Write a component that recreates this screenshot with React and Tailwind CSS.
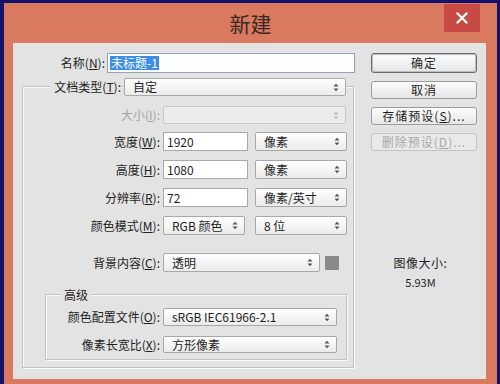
import React from "react";

const F = { fontFamily: '"Noto Sans CJK SC", "Noto Sans", sans-serif' };

function Arrows({ dim }) {
  const c = dim ? "#b8b8b8" : "#555";
  return (
    <svg width="6" height="9" viewBox="0 0 6 9" className="shrink-0">
      <path d="M0.5 3.5 L3 0.8 L5.5 3.5 Z" fill={c} />
      <path d="M0.5 5.5 L3 8.2 L5.5 5.5 Z" fill={c} />
    </svg>
  );
}

function Select({ w, h = 18, children, dim }) {
  return (
    <div
      className={`flex items-center justify-between rounded-[2px] border ${dim ? "border-[#c6c6c6] bg-[#ececec]" : "border-[#a8a8a8] bg-gradient-to-b from-[#ffffff] to-[#ebebeb]"} pl-[8px] pr-[6px] text-[12px] text-[#1e1e1e] shrink-0`}
      style={{ width: w, height: h }}
    >
      <span className="leading-none">{children}</span>
      <Arrows dim={dim} />
    </div>
  );
}

function Input({ w, h = 19, children }) {
  return (
    <div
      className="flex items-center border border-[#a9a9a9] bg-white pl-[3px] text-[12px] text-[#1e1e1e] shrink-0"
      style={{ width: w, height: h }}
    >
      <span className="leading-none">{children}</span>
    </div>
  );
}

function Label({ w, children, dim }) {
  return (
    <div
      className={`shrink-0 text-right text-[12px] leading-none ${dim ? "text-[#a3a3a3]" : "text-[#1e1e1e]"}`}
      style={{ width: w }}
    >
      {children}
    </div>
  );
}

function Btn({ children, h = 18, def, dim }) {
  return (
    <div
      className={`flex w-[106px] items-center justify-center rounded-[3px] border ${def ? "border-[#6d6d6d] shadow-[inset_0_0_0_1px_#bdbdbd]" : dim ? "border-[#c4c4c4]" : "border-[#9c9c9c]"} ${dim ? "bg-[#e9e9e9] text-[#a8a8a8]" : "bg-gradient-to-b from-[#fdfdfd] to-[#e6e6e6] text-[#1e1e1e]"} text-[12px] leading-none tracking-[1px]`}
      style={{ height: h }}
    >
      {children}
    </div>
  );
}

export default function App() {
  return (
    <div className="h-[384px] w-[500px] overflow-hidden bg-[#13126a] pl-[4px] pr-[3px] pt-[3px]" style={F}>
      <div className="relative flex h-[381px] flex-col bg-[#d9795f]">
        <div className="flex h-[40px] items-center justify-center">
          <span className="text-[21px] leading-none text-[#3b2824]">新建</span>
          <div className="absolute left-[440px] top-[1px] flex h-[28px] w-[36px] items-center justify-center bg-[#c84a45]">
            <svg width="12" height="12" viewBox="0 0 12 12">
              <path d="M1.5 1.5 L10.5 10.5 M10.5 1.5 L1.5 10.5" stroke="#fff" strokeWidth="2.2" strokeLinecap="square" />
            </svg>
          </div>
        </div>
        <div className="ml-[9px] flex h-[336px] w-[473px] bg-[#e3e3e3]">
          {/* left column */}
          <div className="w-[342px] shrink-0 pt-[10px]">
            <div className="flex items-center gap-[2px]">
              <Label w={92}>名称(<u>N</u>):</Label>
              <div className="flex h-[20px] w-[248px] items-center border border-[#8ea3bf] bg-white pl-[2px]">
                <span className="bg-[#3a8ee6] px-[1px] text-[12px] leading-[14px] text-white">未标题-1</span>
              </div>
            </div>
            {/* group box */}
            <div className="ml-[9px] mt-[13px] w-[332px] border border-[#c2c2c2] pb-[7px] shadow-[1px_1px_0_#fafafa,inset_1px_1px_0_#fafafa]">
              <div className="-mt-[9px] flex h-[18px] items-center gap-[3px]">
                <div className="flex w-[98px] justify-end">
                  <span className="bg-[#e3e3e3] pl-[4px] text-[12px] leading-[18px] text-[#1e1e1e]">文档类型(<u>T</u>):</span>
                </div>
                <Select w={222}>自定</Select>
              </div>
              <div className="mt-[10px] flex items-center gap-[3px]">
                <Label w={137} dim>大小(<u>I</u>):</Label>
                <Select w={183} h={18} dim></Select>
              </div>
              <div className="mt-[8px] flex items-center gap-[3px]">
                <Label w={137}>宽度(<u>W</u>):</Label>
                <Input w={85}>1920</Input>
                <div className="ml-[4px]"><Select w={92} h={19}>像素</Select></div>
              </div>
              <div className="mt-[9px] flex items-center gap-[3px]">
                <Label w={137}>高度(<u>H</u>):</Label>
                <Input w={85}>1080</Input>
                <div className="ml-[4px]"><Select w={92} h={19}>像素</Select></div>
              </div>
              <div className="mt-[9px] flex items-center gap-[3px]">
                <Label w={137}>分辨率(<u>R</u>):</Label>
                <Input w={85}>72</Input>
                <div className="ml-[4px]"><Select w={92} h={19}>像素/英寸</Select></div>
              </div>
              <div className="mt-[9px] flex items-center gap-[3px]">
                <Label w={137}>颜色模式(<u>M</u>):</Label>
                <Select w={82} h={19}>RGB 颜色</Select>
                <div className="ml-[7px]"><Select w={92} h={19}>8 位</Select></div>
              </div>
              <div className="mt-[18px] flex items-center gap-[3px]">
                <Label w={137}>背景内容(<u>C</u>):</Label>
                <Select w={157} h={19}>透明</Select>
                <div className="ml-[2px] h-[14px] w-[14px] bg-[#8a8a8a]"></div>
              </div>
              {/* advanced */}
              <div className="ml-[22px] mt-[22px] w-[302px] border border-[#c2c2c2] pb-[6px] shadow-[1px_1px_0_#fafafa,inset_1px_1px_0_#fafafa]">
                <div className="-mt-[8px] flex h-[16px]">
                  <span className="ml-[14px] bg-[#e3e3e3] px-[4px] text-[12px] leading-[16px] text-[#1e1e1e]">高级</span>
                </div>
                <div className="mt-[5px] flex items-center gap-[3px]">
                  <Label w={114}>颜色配置文件(<u>O</u>):</Label>
                  <Select w={174} h={18}>sRGB IEC61966-2.1</Select>
                </div>
                <div className="mt-[10px] flex items-center gap-[3px]">
                  <Label w={114}>像素长宽比(<u>X</u>):</Label>
                  <Select w={174} h={17}>方形像素</Select>
                </div>
              </div>
            </div>
          </div>
          {/* right column */}
          <div className="flex flex-1 flex-col pt-[10px]">
            <div className="ml-[16px] flex flex-col gap-[8px]">
              <Btn def h={20}>确定</Btn>
              <Btn>取消</Btn>
              <Btn>存储预设(<u>S</u>)...</Btn>
              <Btn dim>删除预设(<u>D</u>)...</Btn>
            </div>
            <div className="mt-[106px] flex flex-col items-center gap-[8px] text-[12px] leading-none text-[#1e1e1e]">
              <span className="tracking-[0.5px]">图像大小:</span>
              <span className="text-[11px]">5.93M</span>
            </div>
          </div>
        </div>
      </div>
    </div>
  );
}
